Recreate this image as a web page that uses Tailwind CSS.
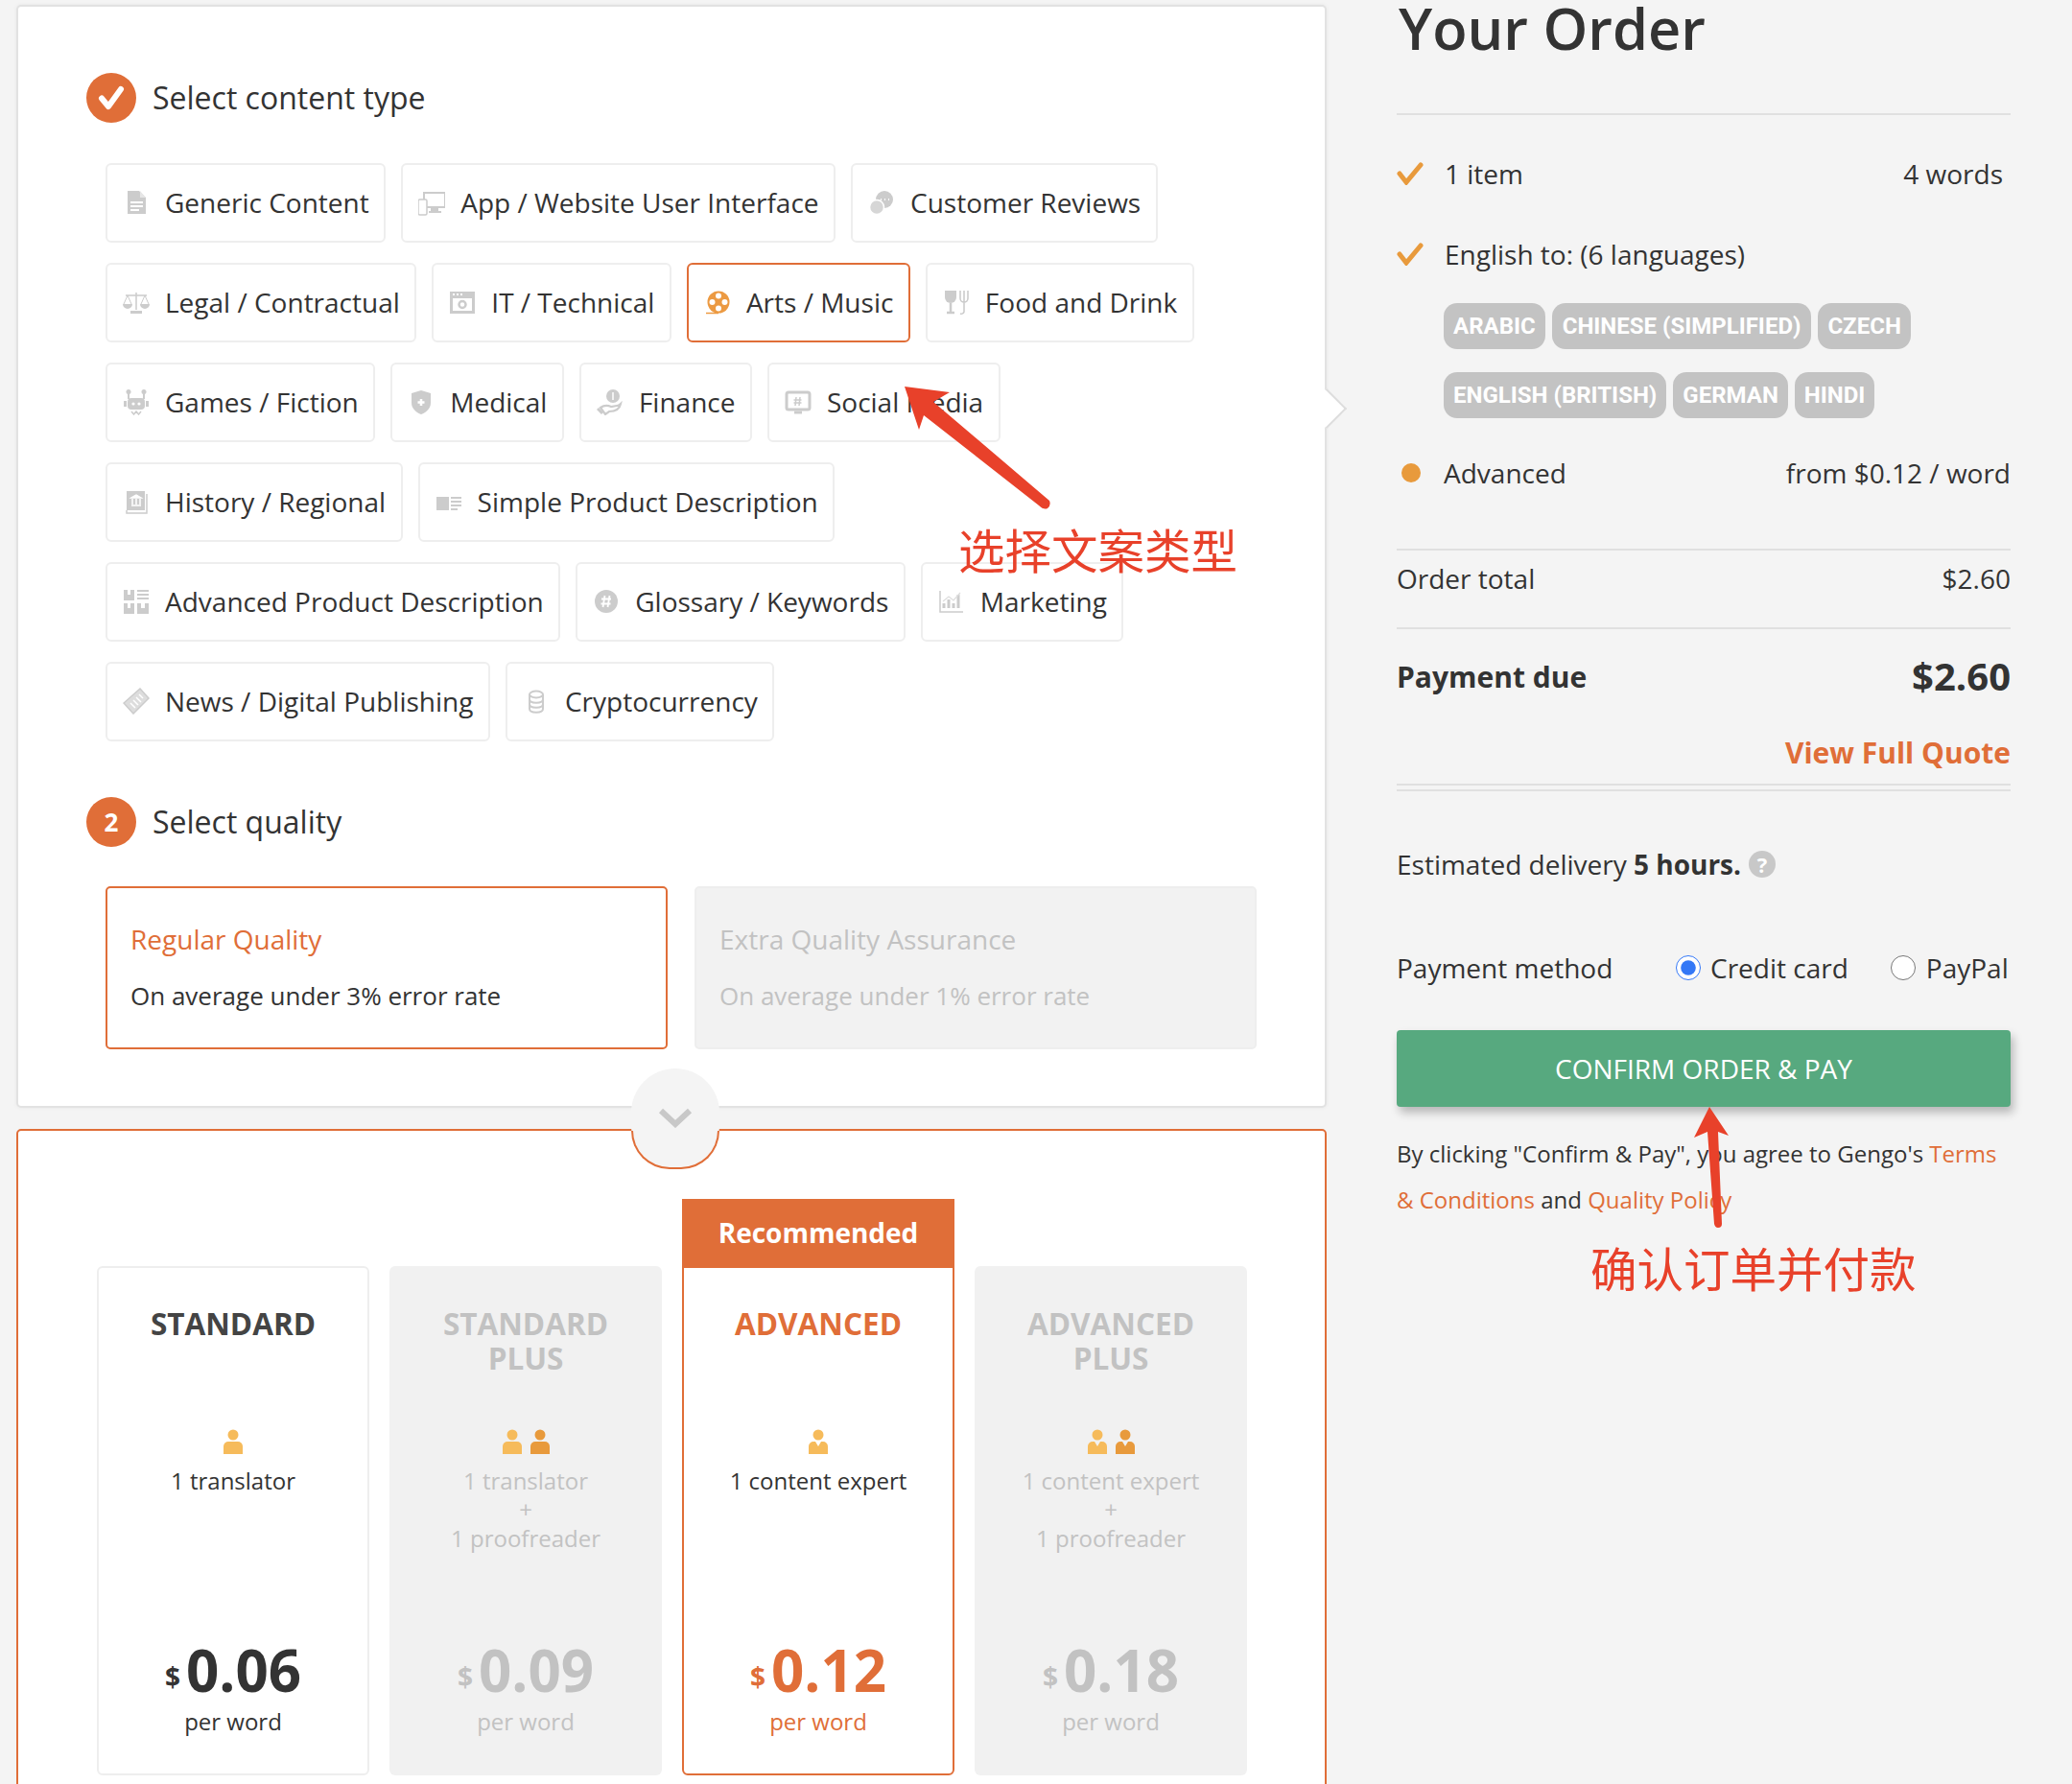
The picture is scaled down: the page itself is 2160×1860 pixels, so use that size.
<!DOCTYPE html>
<html lang="en">
<head>
    <meta charset="UTF-8" />
    <title>Your Order</title>
    <script src="https://cdn.jsdelivr.net/npm/@tailwindcss/browser@4"></script>
</head>
<body class="bg-[#f4f4f4]">
<div class="relative w-[2160px] h-[1860px] overflow-hidden flex font-['Open_Sans','Noto_Sans',sans-serif] text-[#333]">

    <!-- left column -->
    <div class="w-[1366px] ml-[17px] pt-[5px] shrink-0">
        <div class="relative h-[1150px] bg-white border-2 border-[#e2e2e2] rounded-[5px] pl-[71px] pt-[69px] shadow-[0_0_4px_rgba(0,0,0,0.06)]">
            <div class="flex items-center gap-[17px] h-[52px]">
                <span class="w-[52px] h-[52px] rounded-full bg-[#e06e38] flex items-center justify-center">
                    <svg class="w-[30px] h-[30px]" viewBox="0 0 30 30"><path d="M5 15.5 L12 24 L25 6" fill="none" stroke="#fff" stroke-width="6" stroke-linecap="round" stroke-linejoin="round"/></svg>
                </span>
                <span class="text-[32px] pb-[1px]">Select content type</span>
            </div>

            <div class="flex flex-wrap gap-x-[16px] gap-y-[21px] mt-[42px] ml-[20px] w-[1210px] text-[28px]">
                <div class="h-[83px] flex items-center gap-[16px] pl-[16px] pr-[15.500px] pb-[2px] border-2 border-[#eee] rounded-[6px]">
                    <svg class="w-[28px] h-[28px]" viewBox="0 0 28 28"><path d="M5 2h12l7 7v17H5z" fill="#ccc"/><path d="M18 2l6 7h-6z" fill="#e6e6e6"/><path d="M8 14h13M8 18h13M8 22h9" stroke="#fff" stroke-width="2"/></svg>
                    <span>Generic Content</span>
                </div>
                <div class="h-[83px] flex items-center gap-[16px] pl-[16px] pr-[15.500px] pb-[2px] border-2 border-[#eee] rounded-[6px]">
                    <svg class="w-[28px] h-[28px]" viewBox="0 0 28 28"><path d="M6 4h22v15H6z" fill="none" stroke="#ccc" stroke-width="2"/><path d="M13 20h8v3h3v2H11v-2h2z" fill="#ccc"/><rect x="0" y="11" width="9" height="16" rx="1.5" fill="#fff" stroke="#ccc" stroke-width="1.5"/></svg>
                    <span>App / Website User Interface</span>
                </div>
                <div class="h-[83px] flex items-center gap-[16px] pl-[16px] pr-[15.500px] pb-[2px] border-2 border-[#eee] rounded-[6px]">
                    <svg class="w-[28px] h-[28px]" viewBox="0 0 28 28"><circle cx="17" cy="11" r="9" fill="#ccc"/><circle cx="9" cy="19" r="7.5" fill="#d6d6d6" stroke="#fff" stroke-width="1.5"/><path d="M13 11h1M17 11h1M21 11h1" stroke="#fff" stroke-width="2"/></svg>
                    <span>Customer Reviews</span>
                </div>
                <div class="h-[83px] flex items-center gap-[16px] pl-[16px] pr-[15.500px] pb-[2px] border-2 border-[#eee] rounded-[6px]">
                    <svg class="w-[28px] h-[28px]" viewBox="0 0 28 28"><path d="M14 4v18M3 7h22" stroke="#ccc" stroke-width="1.5"/><path d="M0 16a5 5 0 0 0 10 0zM18 16a5 5 0 0 0 10 0z" fill="#ccc"/><path d="M5 7L1 16M5 7l4 9M23 7l-4 9M23 7l4 9" stroke="#ccc" fill="none"/><rect x="8" y="23" width="12" height="3" fill="#ccc"/></svg>
                    <span>Legal / Contractual</span>
                </div>
                <div class="h-[83px] flex items-center gap-[16px] pl-[16px] pr-[15.500px] pb-[2px] border-2 border-[#eee] rounded-[6px]">
                    <svg class="w-[28px] h-[28px]" viewBox="0 0 28 28"><rect x="1" y="3" width="26" height="23" fill="#ccc"/><rect x="4" y="10" width="20" height="13" fill="#fff"/><circle cx="14" cy="16.5" r="3.5" fill="none" stroke="#ccc" stroke-width="2.5"/><path d="M4 6h2M8 6h2M12 6h2" stroke="#fff" stroke-width="2"/></svg>
                    <span>IT / Technical</span>
                </div>
                <div class="h-[83px] flex items-center gap-[16px] pl-[16px] pr-[15.500px] pb-[2px] border-2 border-[#e06e38] rounded-[6px]">
                    <svg class="w-[28px] h-[28px]" viewBox="0 0 28 28"><circle cx="15" cy="14" r="11.5" fill="#ec9a42"/><circle cx="15" cy="7.5" r="3" fill="#fff"/><circle cx="15" cy="20.5" r="3" fill="#fff"/><circle cx="8.5" cy="14" r="3" fill="#fff"/><circle cx="21.5" cy="14" r="3" fill="#fff"/><path d="M2 25.5h13" stroke="#ec9a42" stroke-width="1.5"/></svg>
                    <span>Arts / Music</span>
                </div>
                <div class="h-[83px] flex items-center gap-[16px] pl-[16px] pr-[15.500px] pb-[2px] border-2 border-[#eee] rounded-[6px]">
                    <svg class="w-[28px] h-[28px]" viewBox="0 0 28 28"><path d="M2 2h12v7a6 6 0 0 1-12 0z" fill="#ccc"/><path d="M8 15v9M4 25h8" stroke="#ccc" stroke-width="2.5"/><path d="M18 2v8a4 4 0 0 0 8 0V2M22 2v10M22 12v12a3 3 0 0 1-4 2" stroke="#ccc" stroke-width="1.6" fill="none"/></svg>
                    <span>Food and Drink</span>
                </div>
                <div class="h-[83px] flex items-center gap-[16px] pl-[16px] pr-[15.500px] pb-[2px] border-2 border-[#eee] rounded-[6px]">
                    <svg class="w-[28px] h-[28px]" viewBox="0 0 28 28"><rect x="5" y="10" width="18" height="12" rx="4" fill="#ccc"/><circle cx="6" cy="3.5" r="2.5" fill="#ccc"/><circle cx="22" cy="3.5" r="2.5" fill="#ccc"/><path d="M6 5v6M22 5v6" stroke="#ccc" stroke-width="2"/><rect x="1" y="13" width="3" height="6" fill="#ccc"/><rect x="24" y="13" width="3" height="6" fill="#ccc"/><circle cx="11" cy="16" r="1.6" fill="#fff"/><circle cx="17" cy="16" r="1.6" fill="#fff"/><path d="M9 24l2.500 3 2.500-3 2.500 3 2.500-3" stroke="#ccc" stroke-width="1.5" fill="none"/></svg>
                    <span>Games / Fiction</span>
                </div>
                <div class="h-[83px] flex items-center gap-[16px] pl-[16px] pr-[15.500px] pb-[2px] border-2 border-[#eee] rounded-[6px]">
                    <svg class="w-[28px] h-[28px]" viewBox="0 0 28 28"><path d="M14 2l10 3v10c0 6-5 10-10 12C9 25 4 21 4 15V5z" fill="#ccc"/><path d="M14 11v7M10.500 14.500h7" stroke="#fff" stroke-width="2.500"/></svg>
                    <span>Medical</span>
                </div>
                <div class="h-[83px] flex items-center gap-[16px] pl-[16px] pr-[15.500px] pb-[2px] border-2 border-[#eee] rounded-[6px]">
                    <svg class="w-[28px] h-[28px]" viewBox="0 0 28 28"><circle cx="17" cy="8" r="7" fill="#ccc"/><path d="M17 4v8" stroke="#fff" stroke-width="1.500"/><path d="M4 20c4-3 7-3 11-1l6-1c2 0 3-1 4-2-1 5-5 8-12 8l-4 3z" fill="none" stroke="#ccc" stroke-width="2.200"/><path d="M1 21l5 5" stroke="#ccc" stroke-width="3"/></svg>
                    <span>Finance</span>
                </div>
                <div class="h-[83px] flex items-center gap-[16px] pl-[16px] pr-[15.500px] pb-[2px] border-2 border-[#eee] rounded-[6px]">
                    <svg class="w-[28px] h-[28px]" viewBox="0 0 28 28"><rect x="2" y="4" width="24" height="18" rx="2" fill="none" stroke="#ccc" stroke-width="3"/><path d="M10 25h8" stroke="#ccc" stroke-width="3"/><path d="M12 9l-1 9M16 9l-1 9M9.500 12h8M9.500 15h8" stroke="#ccc" stroke-width="1.500"/></svg>
                    <span>Social Media</span>
                </div>
                <div class="h-[83px] flex items-center gap-[16px] pl-[16px] pr-[15.500px] pb-[2px] border-2 border-[#eee] rounded-[6px]">
                    <svg class="w-[28px] h-[28px]" viewBox="0 0 28 28"><path d="M4 3h19v20H4z" fill="#ccc"/><path d="M4 23v3h21V6" fill="none" stroke="#ccc" stroke-width="1.500"/><path d="M9 10l5-3 5 3zM9 18h10M10 11v6M14 11v6M18 11v6" stroke="#fff" stroke-width="1.500" fill="#fff"/></svg>
                    <span>History / Regional</span>
                </div>
                <div class="h-[83px] flex items-center gap-[16px] pl-[16px] pr-[15.500px] pb-[2px] border-2 border-[#eee] rounded-[6px]">
                    <svg class="w-[28px] h-[28px]" viewBox="0 0 28 28"><rect x="1" y="9" width="13" height="14" fill="#ccc"/><path d="M16 10h11M16 14h11M16 18h11M16 22h7" stroke="#ccc" stroke-width="2"/></svg>
                    <span>Simple Product Description</span>
                </div>
                <div class="h-[83px] flex items-center gap-[16px] pl-[16px] pr-[15.500px] pb-[2px] border-2 border-[#eee] rounded-[6px]">
                    <svg class="w-[28px] h-[28px]" viewBox="0 0 28 28"><path d="M1 2h11v11H1z" fill="#ccc"/><path d="M5 2v5h3V2" fill="#fff"/><path d="M15 3h12M15 7h12M15 11h12" stroke="#ccc" stroke-width="2"/><path d="M1 16h11v11H1zM15 16h12v11H15z" fill="#ccc"/><path d="M5 16v5h3v-5zM19 16v5h4v-5z" fill="#fff"/></svg>
                    <span>Advanced Product Description</span>
                </div>
                <div class="h-[83px] flex items-center gap-[16px] pl-[16px] pr-[15.500px] pb-[2px] border-2 border-[#eee] rounded-[6px]">
                    <svg class="w-[28px] h-[28px]" viewBox="0 0 28 28"><circle cx="14" cy="14" r="12" fill="#ccc"/><path d="M12.500 8l-2 12M17.500 8l-2 12M9 11.500h10M8.500 16.500h10" stroke="#fff" stroke-width="1.800"/></svg>
                    <span>Glossary / Keywords</span>
                </div>
                <div class="h-[83px] flex items-center gap-[16px] pl-[16px] pr-[15.500px] pb-[2px] border-2 border-[#eee] rounded-[6px]">
                    <svg class="w-[28px] h-[28px]" viewBox="0 0 28 28"><path d="M2 3v22h24" fill="none" stroke="#ccc" stroke-width="1.500"/><path d="M6 21v-5M11 21V12M16 21v-5M21 21V7" stroke="#ccc" stroke-width="3"/><path d="M5 14l6-5 5 4 7-8" fill="none" stroke="#ddd" stroke-width="1.200"/></svg>
                    <span>Marketing</span>
                </div>
                <div class="h-[83px] flex items-center gap-[16px] pl-[16px] pr-[15.500px] pb-[2px] border-2 border-[#eee] rounded-[6px]">
                    <svg class="w-[28px] h-[28px]" viewBox="0 0 28 28"><path d="M18 1l9 10L11 27 1 16z" fill="#ddd" stroke="#ccc" stroke-width="1.500"/><path d="M17 7l4 4M14 10l5 5M11 13l5 5M8 16l5 5" stroke="#fff" stroke-width="1.500"/></svg>
                    <span>News / Digital Publishing</span>
                </div>
                <div class="h-[83px] flex items-center gap-[16px] pl-[16px] pr-[15.500px] pb-[2px] border-2 border-[#eee] rounded-[6px]">
                    <svg class="w-[28px] h-[28px]" viewBox="0 0 28 28"><ellipse cx="14" cy="7" rx="7" ry="3.500" fill="none" stroke="#ccc" stroke-width="2"/><path d="M7 7v15c0 5 14 5 14 0V7M7 12c0 5 14 5 14 0M7 17c0 5 14 5 14 0" fill="none" stroke="#ccc" stroke-width="2"/></svg>
                    <span>Cryptocurrency</span>
                </div>
            </div>

            <div class="flex items-center gap-[17px] h-[52px] mt-[58px]">
                <span class="w-[52px] h-[52px] rounded-full bg-[#e06e38] flex items-center justify-center text-white text-[26px] font-bold">2</span>
                <span class="text-[32px] pb-[1px]">Select quality</span>
            </div>

            <div class="flex gap-[28px] mt-[41px] ml-[20px]">
                <div class="w-[586px] h-[170px] border-2 border-[#e06e38] rounded-[5px] pl-[24px] pt-[33px]">
                    <div class="text-[28px] leading-[40px] text-[#e06e38]">Regular Quality</div>
                    <div class="text-[26px] leading-[36px] mt-[21px]">On average under 3% error rate</div>
                </div>
                <div class="w-[586px] h-[170px] bg-[#f2f2f2] border-2 border-[#eee] rounded-[5px] pl-[24px] pt-[33px] text-[#c2c2c2]">
                    <div class="text-[28px] leading-[40px]">Extra Quality Assurance</div>
                    <div class="text-[26px] leading-[36px] mt-[21px]">On average under 1% error rate</div>
                </div>
            </div>

            <!-- pointer to the order column -->
            <div class="absolute right-[-17px] top-[404px] w-[30px] h-[30px] bg-white border-t-2 border-r-2 border-[#ddd] rotate-45"></div>
        </div>

        <div class="mt-[22px] h-[800px] bg-white border-2 border-[#e06e38] rounded-[5px] pt-[141px] pl-[82px]">
            <div class="grid grid-cols-[284px_284px_284px_284px] gap-x-[21px] h-[531px] text-[24px] leading-[30px] text-center">
                <div class="border-2 border-[#eee] rounded-[6px] flex flex-col items-center pt-[40px]">
                    <div class="h-[128px] text-[31.500px] leading-[36px] font-bold text-[#444]">STANDARD</div>
                    <svg class="w-[24px] h-[26px]" viewBox="0 0 24 26"><circle cx="12" cy="6" r="5.500" fill="#f6bb5b"/><path d="M2 26v-8a5 5 0 0 1 5-5h10a5 5 0 0 1 5 5v8z" fill="#f6bb5b"/></svg>
                    <div class="h-[182px] mt-[13px]">1 translator</div>
                    <div class="flex items-end h-[60px] font-bold text-[#333]"><span class="text-[28px] leading-[46px] mr-[6px]">$</span><span class="text-[60px] leading-[60px]">0.06</span></div>
                    <div class="mt-[9px]">per word</div>
                </div>
                <div class="bg-[#f1f1f1] rounded-[6px] flex flex-col items-center pt-[42px] text-[#c2c2c2]">
                    <div class="h-[128px] text-[31.500px] leading-[36px] font-bold w-[200px]">STANDARD PLUS</div>
                    <div class="flex gap-[5px]">
                        <svg class="w-[24px] h-[26px]" viewBox="0 0 24 26"><circle cx="12" cy="6" r="5.500" fill="#f6bb5b"/><path d="M2 26v-8a5 5 0 0 1 5-5h10a5 5 0 0 1 5 5v8z" fill="#f6bb5b"/></svg>
                        <svg class="w-[24px] h-[26px]" viewBox="0 0 24 26"><circle cx="12" cy="6" r="5.500" fill="#e89a3c"/><path d="M2 26v-8a5 5 0 0 1 5-5h10a5 5 0 0 1 5 5v8z" fill="#e89a3c"/></svg>
                    </div>
                    <div class="h-[182px] mt-[13px]">1 translator<br />+<br />1 proofreader</div>
                    <div class="flex items-end h-[60px] font-bold"><span class="text-[28px] leading-[46px] mr-[6px]">$</span><span class="text-[60px] leading-[60px]">0.09</span></div>
                    <div class="mt-[9px]">per word</div>
                </div>
                <div class="relative border-2 border-[#e06e38] rounded-b-[6px] flex flex-col items-center pt-[40px]">
                    <div class="absolute left-[-2px] right-[-2px] top-[-72px] h-[72px] pb-[2px] bg-[#e06e38] text-white text-[28px] font-bold flex items-center justify-center">Recommended</div>
                    <div class="h-[128px] text-[31.500px] leading-[36px] font-bold text-[#e06e38]">ADVANCED</div>
                    <svg class="w-[24px] h-[26px]" viewBox="0 0 24 26"><circle cx="12" cy="6" r="5.500" fill="#f6bb5b"/><path d="M2 26v-8a5 5 0 0 1 5-5h2l3 5 3-5h2a5 5 0 0 1 5 5v8z" fill="#f6bb5b"/></svg>
                    <div class="h-[182px] mt-[13px]">1 content expert</div>
                    <div class="flex items-end h-[60px] font-bold text-[#e06e38]"><span class="text-[28px] leading-[46px] mr-[6px]">$</span><span class="text-[60px] leading-[60px]">0.12</span></div>
                    <div class="mt-[9px] text-[#e06e38]">per word</div>
                </div>
                <div class="bg-[#f1f1f1] rounded-[6px] flex flex-col items-center pt-[42px] text-[#c2c2c2]">
                    <div class="h-[128px] text-[31.500px] leading-[36px] font-bold w-[200px]">ADVANCED PLUS</div>
                    <div class="flex gap-[5px]">
                        <svg class="w-[24px] h-[26px]" viewBox="0 0 24 26"><circle cx="12" cy="6" r="5.500" fill="#f6bb5b"/><path d="M2 26v-8a5 5 0 0 1 5-5h2l3 5 3-5h2a5 5 0 0 1 5 5v8z" fill="#f6bb5b"/></svg>
                        <svg class="w-[24px] h-[26px]" viewBox="0 0 24 26"><circle cx="12" cy="6" r="5.500" fill="#e89a3c"/><path d="M2 26v-8a5 5 0 0 1 5-5h2l3 5 3-5h2a5 5 0 0 1 5 5v8z" fill="#e89a3c"/></svg>
                    </div>
                    <div class="h-[182px] mt-[13px]">1 content expert<br />+<br />1 proofreader</div>
                    <div class="flex items-end h-[60px] font-bold"><span class="text-[28px] leading-[46px] mr-[6px]">$</span><span class="text-[60px] leading-[60px]">0.18</span></div>
                    <div class="mt-[9px]">per word</div>
                </div>
            </div>
        </div>
    </div>

    <!-- right column -->
    <div class="w-[640px] ml-[73px] shrink-0 text-[28px]">
        <div class="h-[120px] border-b-2 border-[#e0e0e0] text-[59.500px] leading-[58px] font-semibold pl-[2px]">Your Order</div>

        <div class="flex items-center h-[40px] mt-[41px] pr-[8px]">
            <svg class="w-[28px] h-[24px] mr-[22px]" viewBox="0 0 28 24"><path d="M3 12l7 9L25 3" fill="none" stroke="#e89a3c" stroke-width="5" stroke-linecap="round"/></svg>
            <span>1 item</span>
            <span class="ml-auto">4 words</span>
        </div>
        <div class="flex items-center h-[40px] mt-[44px]">
            <svg class="w-[28px] h-[24px] mr-[22px]" viewBox="0 0 28 24"><path d="M3 12l7 9L25 3" fill="none" stroke="#e89a3c" stroke-width="5" stroke-linecap="round"/></svg>
            <span>English to: (6 languages)</span>
        </div>
        <div class="mt-[31px] ml-[49px] flex flex-col gap-[24px] font-['Roboto',sans-serif] font-bold text-[24px] text-white">
            <div class="flex gap-[7px]">
                <span class="h-[48px] px-[10px] flex items-center rounded-[14px] bg-[#c3c3c3]">ARABIC</span>
                <span class="h-[48px] px-[11px] flex items-center rounded-[14px] bg-[#c3c3c3]">CHINESE (SIMPLIFIED)</span>
                <span class="h-[48px] px-[10px] flex items-center rounded-[14px] bg-[#c3c3c3]">CZECH</span>
            </div>
            <div class="flex gap-[7px]">
                <span class="h-[48px] px-[10px] flex items-center rounded-[14px] bg-[#c3c3c3]">ENGLISH (BRITISH)</span>
                <span class="h-[48px] px-[10px] flex items-center rounded-[14px] bg-[#c3c3c3]">GERMAN</span>
                <span class="h-[48px] px-[10px] flex items-center rounded-[14px] bg-[#c3c3c3]">HINDI</span>
            </div>
        </div>
        <div class="flex items-center h-[40px] mt-[37px]">
            <span class="w-[20px] h-[20px] rounded-full bg-[#e89a3c] ml-[5px] mr-[24px]"></span>
            <span>Advanced</span>
            <span class="ml-auto">from $0.12 / word</span>
        </div>

        <div class="mt-[59px] border-t-2 border-[#e0e0e0] pt-[9px] pb-[31px] flex items-center justify-between leading-[40px]">
            <span>Order total</span>
            <span>$2.60</span>
        </div>
        <div class="border-t-2 border-[#e0e0e0] pt-[24px] flex items-center justify-between h-[76px] font-bold">
            <span class="text-[30px]">Payment due</span>
            <span class="text-[40px]">$2.60</span>
        </div>
        <div class="mt-[35px] h-[40px] leading-[40px] text-right text-[30px] font-bold text-[#e06e38]">View Full Quote</div>
        <div class="mt-[12px] h-[8px] border-y-2 border-[#e0e0e0]"></div>

        <div class="mt-[56px] h-[40px] flex items-center gap-[8px]">
            <span>Estimated delivery <b class="font-bold">5 hours.</b></span>
            <span class="w-[28px] h-[28px] rounded-full bg-[#c8c8c8] text-white text-[22px] font-bold flex items-center justify-center">?</span>
        </div>

        <div class="mt-[68px] h-[40px] flex items-center whitespace-nowrap">
            <span class="w-[291px]">Payment method</span>
            <input type="radio" name="pay" checked class="w-[26px] h-[26px] m-0 accent-[#3478f6]" />
            <span class="ml-[10px] mr-[44px]">Credit card</span>
            <input type="radio" name="pay" class="w-[26px] h-[26px] m-0" />
            <span class="ml-[11px]">PayPal</span>
        </div>

        <button class="mt-[45px] w-full h-[80px] pb-[1px] bg-[#57a97f] text-white text-[28px] rounded-[4px] shadow-[3px_6px_10px_rgba(0,0,0,0.25)]">CONFIRM ORDER &amp; PAY</button>

        <p class="mt-[25px] text-[24px] leading-[48px]">By clicking "Confirm &amp; Pay", you agree to Gengo's <span class="text-[#e06e38]">Terms &amp; Conditions</span> and <span class="text-[#e06e38]">Quality Policy</span></p>
    </div>

    <!-- chevron tab between the two cards -->
    <div class="absolute left-[658px] top-[1114px] w-[92px] h-[105px] rounded-full bg-[#f4f4f4]"></div>
    <div class="absolute left-[658px] top-[1179px] w-[92px] h-[40px] rounded-b-[46px] border-2 border-t-0 border-[#e06e38]"></div>
    <svg class="absolute left-[686px] top-[1154px] w-[36px] h-[22px]" viewBox="0 0 36 22"><path d="M3 4l15 14L33 4" fill="none" stroke="#c8c8c8" stroke-width="6"/></svg>

    <!-- red annotations -->
    <svg class="absolute left-0 top-0 w-[2160px] h-[1860px] pointer-events-none" viewBox="0 0 2160 1860">
        <path d="M943 403 L990 409 L973 419 L1094 522 Q1096 527 1092 530 Q1088 532 1083 527 L963 433 L958 448 Z" fill="#e8412a"/>
        <path d="M1782 1154 L1802 1184 L1791 1180 L1795 1276 Q1795 1280 1791 1280 Q1788 1280 1787 1276 L1780 1180 L1766 1186 Z" fill="#e8412a"/>
    </svg>
    <div class="absolute left-[999px] top-[537px] text-[48.500px] leading-[70px] text-[#e8412a] whitespace-nowrap font-['Noto_Sans_CJK_SC',sans-serif]">选择文案类型</div>
    <div class="absolute left-[1658px] top-[1286px] text-[48.500px] leading-[70px] text-[#e8412a] whitespace-nowrap font-['Noto_Sans_CJK_SC',sans-serif]">确认订单并付款</div>
</div>
</body>
</html>
